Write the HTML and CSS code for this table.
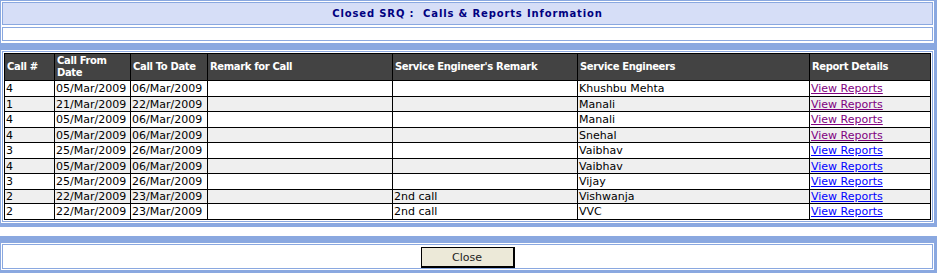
FILE: index.html
```
<!DOCTYPE html>
<html>
<head>
<meta charset="utf-8">
<title>Closed SRQ</title>
<link rel="stylesheet" href="styles.css">
</head>
<body>
<div class="page">
  <div class="sec sec-head">
    <div class="cell title">Closed SRQ :&nbsp; Calls &amp; Reports Information</div>
    <div class="cell blank"></div>
  </div>
  <div class="sec sec-list">
    <div class="cell list-cell">
      <table class="grid">
        <colgroup>
          <col class="c1"><col class="c2"><col class="c3"><col class="c4"><col class="c5"><col class="c6"><col class="c7">
        </colgroup>
        <thead>
          <tr>
            <th>Call #</th>
            <th>Call From Date</th>
            <th>Call To Date</th>
            <th>Remark for Call</th>
            <th>Service Engineer's Remark</th>
            <th>Service Engineers</th>
            <th>Report Details</th>
          </tr>
        </thead>
        <tbody>
          <tr class="odd"><td>4</td><td>05/Mar/2009</td><td>06/Mar/2009</td><td></td><td></td><td>Khushbu Mehta</td><td><a class="visited" href="#">View Reports</a></td></tr>
          <tr class="even"><td>1</td><td>21/Mar/2009</td><td>22/Mar/2009</td><td></td><td></td><td>Manali</td><td><a class="visited" href="#">View Reports</a></td></tr>
          <tr class="odd"><td>4</td><td>05/Mar/2009</td><td>06/Mar/2009</td><td></td><td></td><td>Manali</td><td><a class="visited" href="#">View Reports</a></td></tr>
          <tr class="even"><td>4</td><td>05/Mar/2009</td><td>06/Mar/2009</td><td></td><td></td><td>Snehal</td><td><a class="visited" href="#">View Reports</a></td></tr>
          <tr class="odd"><td>3</td><td>25/Mar/2009</td><td>26/Mar/2009</td><td></td><td></td><td>Vaibhav</td><td><a href="#">View Reports</a></td></tr>
          <tr class="even"><td>4</td><td>05/Mar/2009</td><td>06/Mar/2009</td><td></td><td></td><td>Vaibhav</td><td><a href="#">View Reports</a></td></tr>
          <tr class="odd"><td>3</td><td>25/Mar/2009</td><td>26/Mar/2009</td><td></td><td></td><td>Vijay</td><td><a href="#">View Reports</a></td></tr>
          <tr class="even short"><td>2</td><td>22/Mar/2009</td><td>23/Mar/2009</td><td></td><td>2nd call</td><td>Vishwanja</td><td><a href="#">View Reports</a></td></tr>
          <tr class="odd"><td>2</td><td>22/Mar/2009</td><td>23/Mar/2009</td><td></td><td>2nd call</td><td>VVC</td><td><a href="#">View Reports</a></td></tr>
        </tbody>
      </table>
    </div>
  </div>
  <div class="sec sec-foot">
    <div class="cell foot-cell">
      <button class="btn" type="button">Close</button>
    </div>
  </div>
</div>
</body>
</html>
```
FILE: styles.css
```
html, body {
  margin: 0;
  padding: 0;
  background: #ffffff;
}
body {
  font-family: "DejaVu Sans", Verdana, sans-serif;
  font-size: 11px;
  color: #000;
}
.page {
  width: 937px;
  display: flex;
  flex-direction: column;
}
.sec {
  box-sizing: border-box;
  width: 937px;
  background: #fff;
  border-style: solid;
  border-color: #8aa8e0;
  border-width: 1px 3px 1px 1px;
  padding: 1px;
  display: flex;
  flex-direction: column;
  gap: 2px;
}
.cell {
  border: 1px solid #8aa8e0;
}
.sec-head {
  border-bottom-width: 7px;
  padding-bottom: 2px;
}
.title {
  height: 21px;
  background: #d6def7;
  color: #000080;
  font-weight: bold;
  font-size: 10px;
  letter-spacing: 0.85px;
  display: flex;
  align-items: center;
  justify-content: center;
}
.blank {
  height: 12px;
}
.sec-list {
  border-top-width: 0;
  border-bottom-width: 4px;
}
.list-cell {
  padding: 1px;
}
.grid {
  width: 100%;
  border-collapse: collapse;
  table-layout: fixed;
  border: 1px solid #000;
}
.c1 { width: 50px; }
.c2 { width: 76px; }
.c3 { width: 77px; }
.c4 { width: 185px; }
.c5 { width: 185px; }
.c6 { width: 232px; }
.c7 { width: 121px; }
.grid th {
  background: #434343;
  color: #fff;
  font-weight: bold;
  font-size: 10px;
  letter-spacing: -0.35px;
  line-height: 12px;
  text-align: left;
  height: 26px;
  padding: 0 2px;
  border: 1px solid #000;
  vertical-align: middle;
}
.grid td {
  border: 1px solid #000;
  padding: 0 1px;
  height: 15px;
  line-height: 13px;
  vertical-align: middle;
  white-space: nowrap;
  overflow: hidden;
}
.grid tr.even td {
  background: #efefef;
  height: 14px;
}
.grid tr.short td {
  height: 13px;
}
.grid a {
  color: #0000ff;
  text-decoration: underline;
}
.grid a.visited {
  color: #800080;
}
.sec-foot {
  margin-top: 9px;
  border-top-width: 7px;
  border-bottom-width: 3px;
}
.foot-cell {
  height: 23px;
  display: flex;
  align-items: center;
  justify-content: center;
}
.btn {
  box-sizing: border-box;
  width: 94px;
  height: 21px;
  margin-top: 2px;
  background: #ece9d8;
  border-style: solid;
  border-color: #000;
  border-width: 1px 2px 2px 1px;
  font-family: "DejaVu Sans", Verdana, sans-serif;
  font-size: 11px;
  color: #222;
  padding: 0;
}
```
